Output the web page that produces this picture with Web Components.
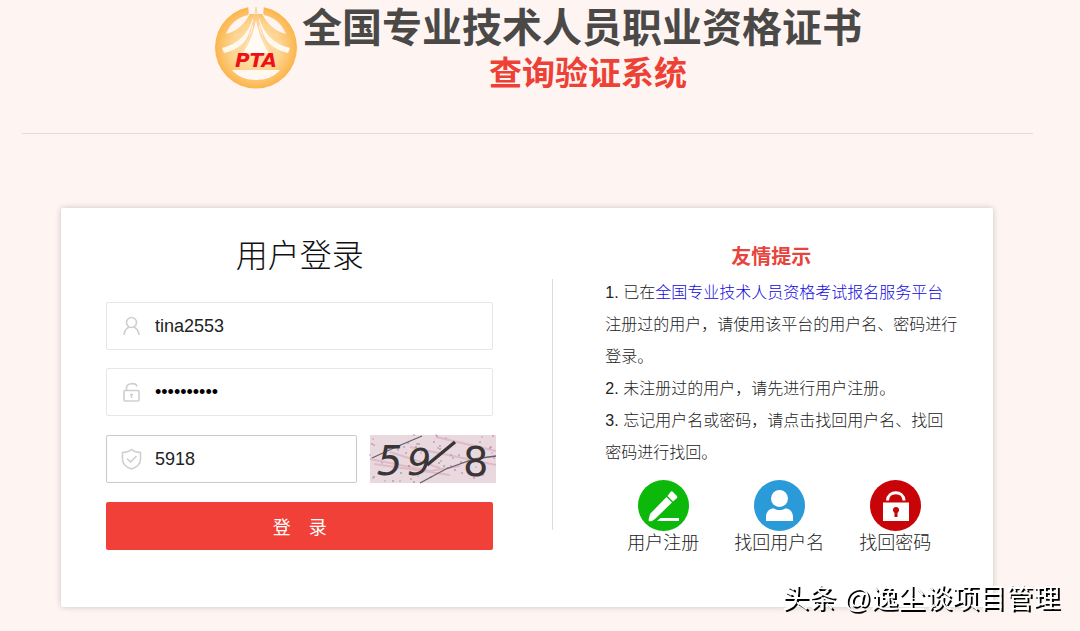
<!DOCTYPE html>
<html lang="zh-CN">
<head>
<meta charset="utf-8">
<meta name="viewport" content="width=device-width, initial-scale=1">
<title>用户登录</title>
<style>
  body {
    margin: 0;
    min-height: 100vh;
    background: #fef5f2;
    color: #444;
    font-family: "Liberation Sans", "Noto Sans CJK SC", sans-serif;
  }
</style>
</head>
<body>
<login-page></login-page>

<script>
class SiteHeader extends HTMLElement {
  constructor() {
    super();
    this.attachShadow({ mode: "open" });
  }

  connectedCallback() {
    this.shadowRoot.innerHTML = `
      <style>
        :host { display: block; }
        header {
          display: flex;
          justify-content: center;
          gap: 4px;
          padding: 6px 4px 37px 0;
        }
        .logo { width: 84px; height: 84px; flex: none; }
        .names { text-align: center; }
        h1, p {
          margin: 0;
          font-weight: bold;
          line-height: 45px;
          white-space: nowrap;
        }
        h1 { font-size: 40px; color: #4b4948; }
        p { font-size: 33px; color: #ee4136; padding-left: 12px; }
        hr {
          margin: 0 47px 0 22px;
          border: 0;
          border-top: 1px solid #e4dcda;
        }
      </style>
      <header>
        <svg class="logo" viewBox="0 0 84 84" aria-hidden="true">
          <defs>
            <radialGradient id="gold">
              <stop offset="0" stop-color="#ffe7b8"/>
              <stop offset="0.6" stop-color="#fdd491"/>
              <stop offset="1" stop-color="#fbb54c"/>
            </radialGradient>
          </defs>
          <circle cx="42" cy="41.500" r="41" fill="url(#gold)"/>
          <path d="M34 0 H50 L49 8 H35 Z" fill="#fef5f2"/>
          <path d="M38 0 C36 12 27 24 12 28 C16 18 24 11 34 9 Z M46 0 C48 12 57 24 72 28 C68 18 60 11 50 9 Z" fill="#fef5f2"/>
          <path d="M37 0 L42 6 L47 0 Z" fill="#fef5f2"/>
          <path d="M39 12 C34 28 24 38 8 42 L10 47 C24 44 34 35 39 22 Z M45 12 C50 28 60 38 76 42 L74 47 C60 44 50 35 45 22 Z" fill="#fff8ee"/>
          <path d="M42 14 C40 26 35 38 29 47 H55 C49 38 44 26 42 14 Z" fill="#fffaf4"/>
          <path d="M42 1 C39 22 33 36 25 46 M42 1 C45 22 51 36 59 46" fill="none" stroke="#fbcfa6"/>
          <path d="M18 64 H66 C60 71 51 74 42 74 C33 74 24 71 18 64 Z" fill="#fff8f0"/>
          <text x="42" y="61" text-anchor="middle" font-family="DejaVu Sans" font-size="20" font-weight="bold" font-style="italic" fill="#ee1018">PTA</text>
        </svg>
        <div class="names">
          <h1>全国专业技术人员职业资格证书</h1>
          <p>查询验证系统</p>
        </div>
      </header>
      <hr>`;
  }
}
customElements.define("site-header", SiteHeader);

class IconField extends HTMLElement {
  constructor() {
    super();
    this.attachShadow({ mode: "open" });
  }

  connectedCallback() {
    const type = this.getAttribute("type") || "text";
    const label = this.getAttribute("label");
    const value = this.getAttribute("value") || "";
    this.shadowRoot.innerHTML = `
      <style>
        :host { display: block; --line: #e6e6e6; }
        label {
          box-sizing: border-box;
          display: flex;
          align-items: center;
          gap: 13px;
          height: 48px;
          padding: 0 14px;
          border: 1px solid var(--line);
          border-radius: 2px;
          background: #fff;
        }
        :host([strong]) { --line: #c9c9c9; }
        ::slotted(svg) { flex: none; width: 21px; height: 22px; }
        input {
          flex: 1;
          min-width: 0;
          padding: 0;
          border: 0;
          outline: 0;
          background: none;
          color: #222;
          font-family: inherit;
          font-size: 18px;
        }
        input[type=password] { color: #000; }
      </style>
      <label for="box">
        <slot name="icon"></slot>
        <input id="box" type="${type}" value="${value}" aria-label="${label}">
      </label>`;
  }
}
customElements.define("icon-field", IconField);

class CaptchaImage extends HTMLElement {
  constructor() {
    super();
    this.attachShadow({ mode: "open" });
  }

  connectedCallback() {
    // noise dots, spread by a small fixed generator
    const colors = ["#8a6fae", "#c0507a", "#6a6080", "#b487b8"];
    let dots = "";
    let seed = 7;
    const next = (n) => {
      seed = (seed * 1103 + 377) % 9973;
      return seed % n;
    };
    for (let i = 0; i < 65; i++) {
      const x = next(126);
      const y = next(48);
      dots += `<circle cx="${x}" cy="${y}" r="0.7" fill="${colors[i % 4]}"/>`;
    }
    this.shadowRoot.innerHTML = `
      <style>
        :host { display: block; flex: none; }
        svg { display: block; width: 126px; height: 48px; overflow: visible; }
      </style>
      <svg viewBox="0 0 126 48" role="img" aria-label="验证码">
        <rect width="126" height="48" fill="#e9d9df"/>
        <g fill="none" stroke="#dcbcc6" stroke-width="2">
          <path d="M0 24 L60 36 L90 31 M4 29 L80 40 M40 12 L126 30 M66 2 L126 16 M20 17 L70 33"/>
        </g>
        ${dots}
        <path d="M2 23 L26 12 L52 1 M50 48 L76 34 L104 24 L126 21" fill="none" stroke="#66606a" stroke-width="1.3"/>
        <g font-family="DejaVu Sans" fill="#3a3638">
          <text x="7" y="40" font-size="40" font-style="italic">5</text>
          <text x="37" y="40" font-size="38" font-style="italic">9</text>
          <text x="93" y="41" font-size="40">8</text>
        </g>
        <path d="M57 30 L85 7" stroke="#3a3638" stroke-width="3.5"/>
      </svg>`;
  }
}
customElements.define("captcha-image", CaptchaImage);

class LoginForm extends HTMLElement {
  constructor() {
    super();
    this.attachShadow({ mode: "open" });
  }

  connectedCallback() {
    this.shadowRoot.innerHTML = `
      <style>
        :host { display: block; padding: 24px 59px 57px 45px; }
        h2 {
          margin: 0 0 22px;
          color: #111;
          font-size: 32px;
          font-weight: 300;
          line-height: 48px;
          text-align: center;
        }
        form { display: flex; flex-direction: column; gap: 18px; }
        .code {
          display: flex;
          align-items: center;
          gap: 13px;
          height: 50px;
          margin-right: -3px;
        }
        .code icon-field { flex: 1; min-width: 0; }
        svg { fill: none; stroke: #cfcfcf; stroke-width: 1.6; }
        button {
          height: 48px;
          border: 0;
          border-radius: 2px;
          background: #f04037;
          color: #fff;
          font-family: inherit;
          font-size: 18px;
        }
      </style>
      <h2>用户登录</h2>
      <form>
        <icon-field label="用户名" value="tina2553">
          <svg slot="icon" viewBox="0 0 21 22">
            <circle cx="10.500" cy="7.500" r="5"/>
            <path d="M3 20 C3.500 15.500 5.500 13 8.500 12 M12.500 12 C15.500 13 17.500 15.500 18 20"/>
          </svg>
        </icon-field>
        <icon-field label="密码" type="password" value="abcdefghij">
          <svg slot="icon" viewBox="0 0 21 22">
            <rect x="3" y="9.500" width="15" height="10.500" rx="1"/>
            <path d="M5.500 9 V7 C5.500 1.500 15 1.500 16 5.500"/>
            <path d="M10.500 13 V17 M9 13.500 H12"/>
          </svg>
        </icon-field>
        <div class="code">
          <icon-field strong label="验证码" value="5918">
            <svg slot="icon" viewBox="0 0 21 22">
              <path d="M10.500 1.500 C13 3.500 16 4.500 19.500 4.500 V11 C19.500 16 15 19.500 10.500 21 C6 19.500 1.500 16 1.500 11 V4.500 C5 4.500 8 3.500 10.500 1.500 Z"/>
              <path d="M6 10.500 L9.500 14 L15.500 8"/>
            </svg>
          </icon-field>
          <captcha-image></captcha-image>
        </div>
        <button type="button">登　录</button>
      </form>`;
  }
}
customElements.define("login-form", LoginForm);

class IconLink extends HTMLElement {
  constructor() {
    super();
    this.attachShadow({ mode: "open" });
  }

  connectedCallback() {
    this.shadowRoot.innerHTML = `
      <style>
        :host { display: block; width: 116px; }
        a {
          display: flex;
          flex-direction: column;
          align-items: center;
          color: #222;
          font-size: 18px;
          font-weight: 300;
          line-height: 24px;
          text-decoration: none;
          white-space: nowrap;
        }
        ::slotted(svg) { width: 51px; height: 51px; }
      </style>
      <a href="#"><slot name="icon"></slot><slot></slot></a>`;
  }
}
customElements.define("icon-link", IconLink);

class LoginTips extends HTMLElement {
  constructor() {
    super();
    this.attachShadow({ mode: "open" });
  }

  connectedCallback() {
    this.shadowRoot.innerHTML = `
      <style>
        :host {
          display: block;
          padding-top: 33px;
        }
        h3 {
          margin: 0 4px 4px 0;
          color: #e8433c;
          font-size: 20px;
          line-height: 32px;
          text-align: center;
        }
        .text {
          padding: 0 20px 0 52px;
          color: #222;
          font-size: 16px;
          font-weight: 300;
          line-height: 32px;
        }
        .text p { margin: 0; }
        .text a { color: #1208e0; text-decoration: none; }
        nav { display: flex; padding: 11px 0 0 52px; }
      </style>
      <h3>友情提示</h3>
      <div class="text">
        <p>1. 已在<a href="#">全国专业技术人员资格考试报名服务平台</a><br>注册过的用户，请使用该平台的用户名、密码进行<br>登录。</p>
        <p>2. 未注册过的用户，请先进行用户注册。</p>
        <p>3. 忘记用户名或密码，请点击找回用户名、找回<br>密码进行找回。</p>
      </div>
      <nav>
        <icon-link>
          <svg slot="icon" viewBox="0 0 51 51">
            <circle cx="25.500" cy="25.500" r="25.500" fill="#0cb80a"/>
            <path d="M10.500 40 L12 34 L28.500 17 L34 22.500 L17 39 L14 41 Q10.500 42 10.500 40 Z M29.500 16 L32.500 12 Q33.500 10.500 35 12 L38.500 15.500 Q40 17 38.500 18.500 L35 21.500 Z M19 41 L22.500 38 H41 V41 Z" fill="#fff"/>
          </svg>
          用户注册
        </icon-link>
        <icon-link>
          <svg slot="icon" viewBox="0 0 51 51">
            <circle cx="25.500" cy="25.500" r="25.500" fill="#2a9bd8"/>
            <circle cx="25.500" cy="18.500" r="8.500" fill="#fff"/>
            <path d="M12 41 V37 C12 31 16 28.500 20 28.500 C23 30.500 28 30.500 31 28.500 C35 28.500 39 31 39 37 V41 Z" fill="#fff"/>
          </svg>
          找回用户名
        </icon-link>
        <icon-link>
          <svg slot="icon" viewBox="0 0 51 51">
            <circle cx="25.500" cy="25.500" r="25.500" fill="#c90408"/>
            <path d="M17.500 20.500 C18 10 33.500 10 34 20.500" fill="none" stroke="#fff" stroke-width="3"/>
            <rect x="13" y="22.500" width="26" height="18.500" fill="#fff"/>
            <circle cx="26" cy="30" r="3" fill="#c90408"/>
            <path d="M24.500 31 H27.500 V37 H24.500 Z" fill="#c90408"/>
          </svg>
          找回密码
        </icon-link>
      </nav>`;
  }
}
customElements.define("login-tips", LoginTips);

class LoginPage extends HTMLElement {
  constructor() {
    super();
    this.attachShadow({ mode: "open" });
  }

  connectedCallback() {
    this.shadowRoot.innerHTML = `
      <style>
        :host { display: block; }
        main {
          display: grid;
          grid-template-columns: minmax(0, 19fr) 1px minmax(0, 17fr);
          margin: 74px 87px 20px 61px;
          background: #fff;
          border-radius: 2px;
          box-shadow: 0 0 6px rgba(0, 0, 0, 0.2);
        }
        .divider {
          margin: 71px 0 77px;
          background: #dcdcdc;
        }
        .sign {
          position: fixed;
          right: 20px;
          bottom: 12px;
          color: #fff;
          font-size: 27px;
          line-height: 40px;
          text-shadow: 2px 2px 0 #000;
          white-space: nowrap;
        }
      </style>
      <site-header></site-header>
      <main>
        <login-form></login-form>
        <div class="divider"></div>
        <login-tips></login-tips>
      </main>
      <div class="sign">头条 @逸尘谈项目管理</div>`;
  }
}
customElements.define("login-page", LoginPage);
</script>
</body>
</html>
